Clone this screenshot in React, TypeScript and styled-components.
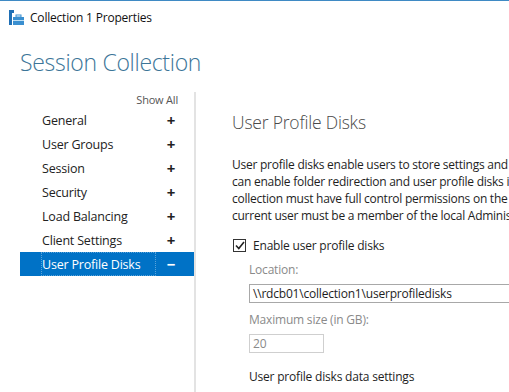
import React from "react";
import styled, { createGlobalStyle } from "styled-components";

const GlobalStyle = createGlobalStyle`
  html, body { margin: 0; padding: 0; background: #fff; }
  body { font-family: "Open Sans", "Noto Sans", sans-serif; color: #1e1e1e; }
`;

const Window = styled.div`
  width: 509px;
  height: 392px;
  overflow: hidden;
  background: #fff;
  border-top: 1px solid #3f8ac4;
  box-sizing: border-box;
  display: flex;
  flex-direction: column;
`;

const TitleBar = styled.div`
  height: 32px;
  display: flex;
  align-items: center;
  gap: 5px;
  padding-left: 8px;
  font-size: 12px;
  color: #111;
  letter-spacing: -0.2px;
`;

const Heading = styled.div`
  padding-left: 20px;
  margin-top: 14px;
  font-size: 23px;
  font-weight: 300;
  color: #3c7598;
  letter-spacing: -0.3px;
  height: 30px;
  line-height: 30px;
`;

const Body = styled.div`
  flex: 1;
  display: flex;
  margin-top: 15px;
  min-height: 0;
`;

const Sidebar = styled.div`
  width: 174px;
  margin-left: 20px;
  border-right: 2px solid #e3e3e3;
  display: flex;
  flex-direction: column;
`;

const ShowAll = styled.div`
  height: 16px;
  line-height: 16px;
  text-align: right;
  padding-right: 16px;
  font-size: 11px;
  color: #555;
  letter-spacing: -0.2px;
`;

const NavRow = styled.div<{ $active?: boolean }>`
  height: 24px;
  display: flex;
  align-items: stretch;
  padding-left: 21px;
  padding-right: 18px;
  font-size: 12.5px;
  letter-spacing: -0.2px;
  color: ${(p) => (p.$active ? "#fff" : "#222")};
  background: ${(p) => (p.$active ? "#0072c6" : "transparent")};
`;

const NavLabel = styled.span<{ $active?: boolean }>`
  flex: 1;
  display: flex;
  align-items: center;
  margin-right: 10px;
  border: 1px dotted ${(p) => (p.$active ? "rgba(255,255,255,0.35)" : "transparent")};
  box-sizing: border-box;
`;

const Sign = styled.span`
  display: flex;
  align-items: center;
  justify-content: center;
  font-size: 15px;
  font-weight: 700;
  width: 10px;
`;

const Content = styled.div`
  flex: 1;
  padding-left: 36px;
  min-width: 0;
  white-space: nowrap;
  overflow: hidden;
`;

const SectionTitle = styled.div`
  font-size: 17.5px;
  font-weight: 300;
  color: #4a4a4a;
  margin-top: 17px;
  height: 26px;
  line-height: 26px;
  letter-spacing: -0.2px;
`;

const Paragraph = styled.div`
  margin-top: 21px;
  font-size: 12px;
  line-height: 17px;
  letter-spacing: -0.25px;
  color: #1e1e1e;
`;

const CheckRow = styled.label`
  display: flex;
  align-items: center;
  gap: 7px;
  margin-top: 13px;
  margin-left: 1px;
  height: 16px;
  font-size: 12px;
  letter-spacing: -0.2px;
`;

const Box = styled.span`
  width: 11px;
  height: 11px;
  border: 1px solid #333;
  display: flex;
  align-items: center;
  justify-content: center;
  background: #fff;
`;

const Group = styled.div`
  padding-left: 17px;
`;

const FieldLabel = styled.div<{ $muted?: boolean; $gap?: number }>`
  font-size: 12px;
  letter-spacing: -0.2px;
  color: ${(p) => (p.$muted ? "#8a8a8a" : "#1e1e1e")};
  height: 16px;
  line-height: 16px;
  margin-top: ${(p) => (p.$gap ? `${p.$gap}px` : "9px")};
`;

const TextBox = styled.div<{ $w?: number; $muted?: boolean }>`
  width: ${(p) => (p.$w ? `${p.$w}px` : "400px")};
  height: 19px;
  border: 1px solid ${(p) => (p.$muted ? "#cfcfcf" : "#a8a8a8")};
  margin-top: 6px;
  box-sizing: border-box;
  padding-left: 3px;
  font-size: 12px;
  line-height: 17px;
  letter-spacing: -0.2px;
  color: ${(p) => (p.$muted ? "#8a8a8a" : "#1e1e1e")};
`;

const navItems = [
  "General",
  "User Groups",
  "Session",
  "Security",
  "Load Balancing",
  "Client Settings",
];

function AppIcon() {
  return (
    <svg width="17" height="17" viewBox="0 0 17 17">
      <rect x="1" y="1" width="5" height="3" fill="#1f6fb5" />
      <rect x="1" y="4" width="3" height="12" fill="#1f6fb5" />
      <rect x="5" y="8" width="11" height="8" fill="#3a8fd0" />
      <rect x="8" y="6" width="5" height="2" fill="none" stroke="#3a8fd0" strokeWidth="1" />
      <rect x="5" y="11" width="11" height="1" fill="#bfe0f5" />
    </svg>
  );
}

export default function App() {
  return (
    <>
      <GlobalStyle />
      <Window>
        <TitleBar>
          <AppIcon />
          <span>Collection 1 Properties</span>
        </TitleBar>
        <Heading>Session Collection</Heading>
        <Body>
          <Sidebar>
            <ShowAll>Show All</ShowAll>
            {navItems.map((n) => (
              <NavRow key={n}>
                <NavLabel>{n}</NavLabel>
                <Sign>+</Sign>
              </NavRow>
            ))}
            <NavRow $active>
              <NavLabel $active>User Profile Disks</NavLabel>
              <Sign>−</Sign>
            </NavRow>
          </Sidebar>
          <Content>
            <SectionTitle>User Profile Disks</SectionTitle>
            <Paragraph>
              User profile disks enable users to store settings and files in a central location. You
              <br />
              can enable folder redirection and user profile disks in the session collection. The session
              <br />
              collection must have full control permissions on the user profile disks share, and the
              <br />
              current user must be a member of the local Administrators group on that server.
            </Paragraph>
            <CheckRow>
              <Box>
                <svg width="10" height="9" viewBox="0 0 10 9">
                  <path d="M1 4.5 L3.8 7.5 L9 1" fill="none" stroke="#222" strokeWidth="1.6" />
                </svg>
              </Box>
              Enable user profile disks
            </CheckRow>
            <Group>
              <FieldLabel $muted>Location:</FieldLabel>
              <TextBox>\\rdcb01\collection1\userprofiledisks</TextBox>
              <FieldLabel $muted>Maximum size (in GB):</FieldLabel>
              <TextBox $w={75} $muted>20</TextBox>
              <FieldLabel $gap={16}>User profile disks data settings</FieldLabel>
            </Group>
          </Content>
        </Body>
      </Window>
    </>
  );
}
